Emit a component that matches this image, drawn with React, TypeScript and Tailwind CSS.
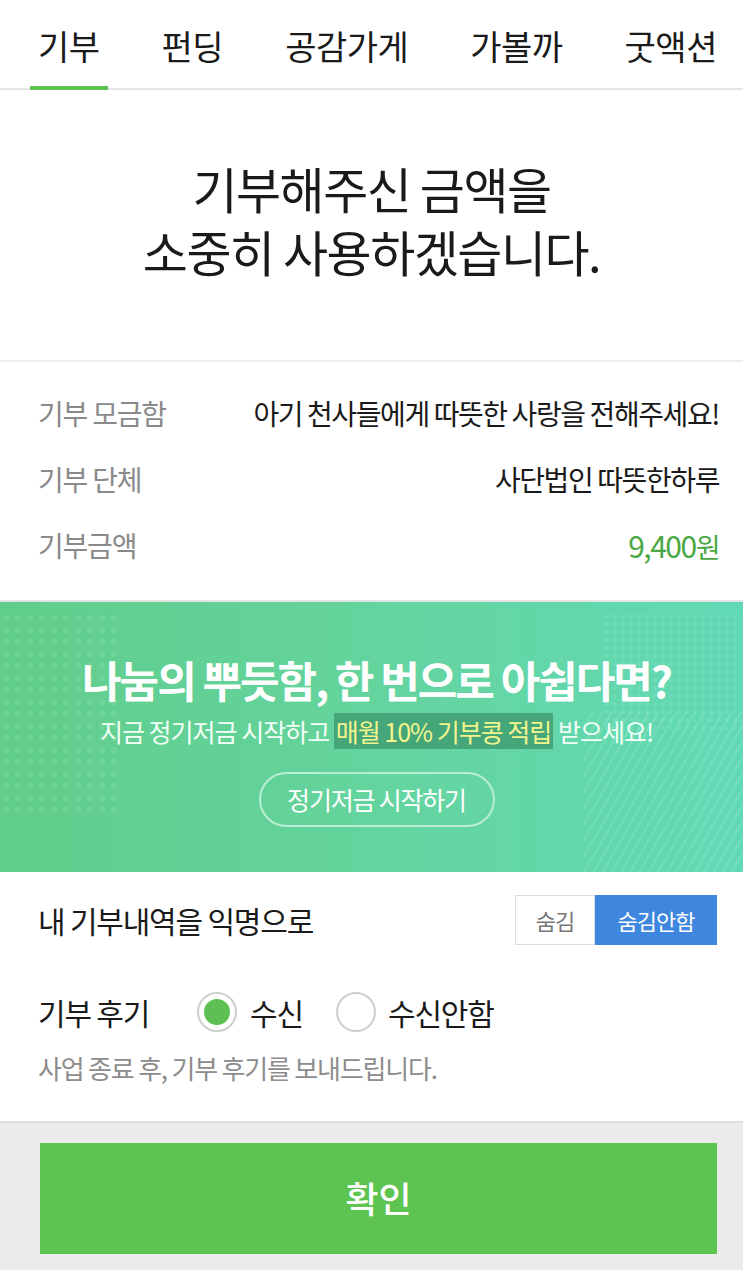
import React from "react";

const font = { fontFamily: '"Noto Sans CJK KR", "Noto Sans", sans-serif' };

export default function App() {
  const tabs = ["기부", "펀딩", "공감가게", "가볼까", "굿액션"];
  return (
    <div className="w-[743px] h-[1270px] bg-white overflow-hidden flex flex-col" style={font}>
      {/* Tabs */}
      <div className="h-[90px] shrink-0 flex items-stretch pl-[30px] gap-[46px] border-b-2 border-[#e6e6e6]">
        {tabs.map((t, i) => (
          <div key={t} className="relative px-[8px] flex items-center pt-[4px]">
            <span className="text-[34px] leading-none text-[#1a1a1a] tracking-[-0.5px] whitespace-nowrap">{t}</span>
            {i === 0 && <div className="absolute left-0 right-0 bottom-[-2px] h-[4px] bg-[#5cc152]" />}
          </div>
        ))}
      </div>

      {/* Heading */}
      <div className="shrink-0 pt-[66px] pb-[78px] flex flex-col items-center border-b-2 border-[#ececec]">
        <p className="text-[49px] leading-[63px] text-[#1a1a1a] tracking-[-1.5px] text-center">기부해주신 금액을</p>
        <p className="text-[49px] leading-[63px] text-[#1a1a1a] tracking-[-1.5px] text-center">소중히 사용하겠습니다.</p>
      </div>

      {/* Info */}
      <div className="shrink-0 pl-[38px] pr-[24px] pt-[18px] pb-[22px] flex flex-col">
        <div className="h-[66px] flex items-center justify-between">
          <span className="text-[28px] text-[#8a8a8a] tracking-[-1.2px]">기부 모금함</span>
          <span className="text-[28px] text-[#1a1a1a] tracking-[-1.4px]">아기 천사들에게 따뜻한 사랑을 전해주세요!</span>
        </div>
        <div className="h-[66px] flex items-center justify-between">
          <span className="text-[28px] text-[#8a8a8a] tracking-[-1.2px]">기부 단체</span>
          <span className="text-[28px] text-[#1a1a1a] tracking-[-1.4px]">사단법인 따뜻한하루</span>
        </div>
        <div className="h-[66px] flex items-center justify-between">
          <span className="text-[28px] text-[#8a8a8a] tracking-[-1.2px]">기부금액</span>
          <span className="text-[30px] text-[#4aa844] tracking-[-1.5px]">9,400<span className="text-[27px]">원</span></span>
        </div>
      </div>

      {/* Banner */}
      <div className="shrink-0 relative h-[272px] pl-[10px] border-t-2 border-[#e4e4e4] bg-[linear-gradient(90deg,#61cd8b_0%,#64d49e_50%,#62d9b6_100%)] flex flex-col items-center overflow-hidden">
        <div className="absolute left-0 top-[10px] w-[120px] h-[200px] opacity-40 bg-[radial-gradient(circle,#7fdca0_3px,transparent_3.5px)] bg-[length:12px_12px]" />
        <div className="absolute right-0 top-[10px] w-[140px] h-[120px] opacity-30 bg-[radial-gradient(circle,#8fe6c6_1.5px,transparent_2px)] bg-[length:8px_8px]" />
        <div className="absolute right-0 bottom-0 w-[160px] h-[160px] opacity-25 bg-[repeating-linear-gradient(120deg,#9ff0d4_0px,#9ff0d4_2px,transparent_2px,transparent_8px)]" />
        <p className="relative mt-[52px] text-[43px] leading-[50px] font-bold text-white tracking-[-2px] whitespace-nowrap">나눔의 뿌듯함, 한 번으로 아쉽다면?</p>
        <p className="relative mt-[11px] text-[25px] leading-[32px] text-[#f1fff6] tracking-[-1px] whitespace-nowrap">
          지금 정기저금 시작하고 <span className="bg-[#45a679] text-[#f3f58c] px-[2px]">매월 10% 기부콩 적립</span> 받으세요!
        </p>
        <div className="relative mt-[25px] w-[236px] h-[55px] rounded-full border-2 border-[#b9eed4] flex items-center justify-center">
          <span className="text-[25px] text-white tracking-[-1.2px]">정기저금 시작하기</span>
        </div>
      </div>

      {/* Options */}
      <div className="shrink-0 pl-[38px] pr-[26px] pt-[23px] pb-[37px] flex flex-col">
        <div className="flex items-center justify-between">
          <span className="text-[30px] text-[#1a1a1a] tracking-[-1.2px]">내 기부내역을 익명으로</span>
          <div className="flex h-[50px]">
            <div className="w-[80px] border border-[#dcdcdc] flex items-center justify-center text-[22px] text-[#777] tracking-[-1px]">숨김</div>
            <div className="w-[122px] bg-[#3f86de] flex items-center justify-center text-[22px] text-white tracking-[-1px]">숨김안함</div>
          </div>
        </div>
        <div className="mt-[47px] h-[40px] flex items-center">
          <span className="text-[30px] text-[#1a1a1a] tracking-[-1.2px] w-[159px] whitespace-nowrap">기부 후기</span>
          <div className="w-[40px] h-[40px] shrink-0 rounded-full border-2 border-[#cfcfcf] flex items-center justify-center">
            <div className="w-[26px] h-[26px] rounded-full bg-[#5cc152]" />
          </div>
          <span className="ml-[13px] w-[86px] text-[30px] text-[#1a1a1a] tracking-[-1.2px]">수신</span>
          <div className="w-[40px] h-[40px] shrink-0 rounded-full border-2 border-[#cfcfcf]" />
          <span className="ml-[12px] text-[30px] text-[#1a1a1a] tracking-[-1.2px]">수신안함</span>
        </div>
        <p className="mt-[20px] text-[26px] text-[#8c8c8c] tracking-[-1.2px] leading-[32px]">사업 종료 후, 기부 후기를 보내드립니다.</p>
      </div>

      {/* Bottom */}
      <div className="flex-1 bg-[#ebebeb] border-t-2 border-[#e0e0e0] pt-[20px] pl-[40px] pr-[26px]">
        <div className="h-[111px] bg-[#5dc452] flex items-center justify-center pb-[4px]">
          <span className="text-[36px] text-white font-medium">확인</span>
        </div>
      </div>
    </div>
  );
}
